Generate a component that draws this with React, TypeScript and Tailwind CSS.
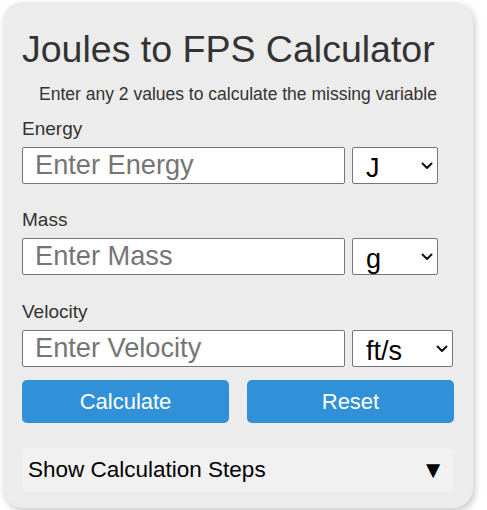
import React from "react";

function Chevron() {
  return (
    <svg
      className="pointer-events-none absolute right-[5px] top-1/2 -translate-y-1/2"
      width="12"
      height="8"
      viewBox="0 0 12 8"
      fill="none"
    >
      <path d="M1.5 1.5 L6 6 L10.5 1.5" stroke="#111" strokeWidth="2" strokeLinecap="round" strokeLinejoin="round" />
    </svg>
  );
}

function Field({
  label,
  placeholder,
  options,
  selectWidth,
  mt,
}: {
  label: string;
  placeholder: string;
  options: string[];
  selectWidth: string;
  mt: string;
}) {
  return (
    <div className={mt}>
      <div className="h-[22px] text-[19px] leading-[22px] text-[#333]">{label}</div>
      <div className="mt-[7px] flex h-[37px] items-stretch gap-[7px]">
        <input
          type="text"
          placeholder={placeholder}
          className="h-[37px] w-[323px] rounded-[2px] border border-[#767676] bg-white pl-[12px] text-[27.2px] text-black placeholder:text-[#757575] outline-none"
        />
        <div className={`relative h-[37px] ${selectWidth}`}>
          <select className="h-[37px] w-full appearance-none rounded-[2px] border border-[#767676] bg-white pl-[13px] text-[27px] text-black outline-none">
            {options.map((o) => (
              <option key={o}>{o}</option>
            ))}
          </select>
          <Chevron />
        </div>
      </div>
    </div>
  );
}

export default function App() {
  return (
    <div
      className="min-h-[510px] bg-white pl-[3px] pt-[2px]"
      style={{ fontFamily: '"Liberation Sans", Arial, sans-serif' }}
    >
      <div className="flex w-[470px] flex-col rounded-[20px] bg-[#ebeceb] px-[19px] pb-[16px] pt-[23px] shadow-[2px_3px_7px_rgba(0,0,0,0.22)]">
        <h1 className="h-[48px] whitespace-nowrap text-[37.5px] font-normal leading-[48px] text-[#333]">Joules to FPS Calculator</h1>
        <p className="mt-[10px] h-[22px] text-center text-[17.5px] leading-[22px] text-[#333]">
          Enter any 2 values to calculate the missing variable
        </p>
        <Field label="Energy" placeholder="Enter Energy" options={["J", "kJ", "ft·lbf"]} selectWidth="w-[86px]" mt="mt-[13px]" />
        <Field label="Mass" placeholder="Enter Mass" options={["g", "kg", "gr", "lb"]} selectWidth="w-[86px]" mt="mt-[25px]" />
        <Field label="Velocity" placeholder="Enter Velocity" options={["ft/s", "m/s"]} selectWidth="w-[101px]" mt="mt-[26px]" />
        <div className="mt-[13px] flex h-[43px] justify-between">
          <button className="w-[207px] rounded-[5px] bg-[#3091d8] text-[22px] text-white">Calculate</button>
          <button className="w-[207px] rounded-[5px] bg-[#3091d8] text-[22px] text-white">Reset</button>
        </div>
        <div className="mt-[25px] flex h-[44px] items-center justify-between rounded-[6px] bg-[#f1f1f1] pl-[6px] pr-[9px] text-[22.5px] text-black">
          <span>Show Calculation Steps</span>
          <span className="text-[24px]">▼</span>
        </div>
      </div>
    </div>
  );
}
